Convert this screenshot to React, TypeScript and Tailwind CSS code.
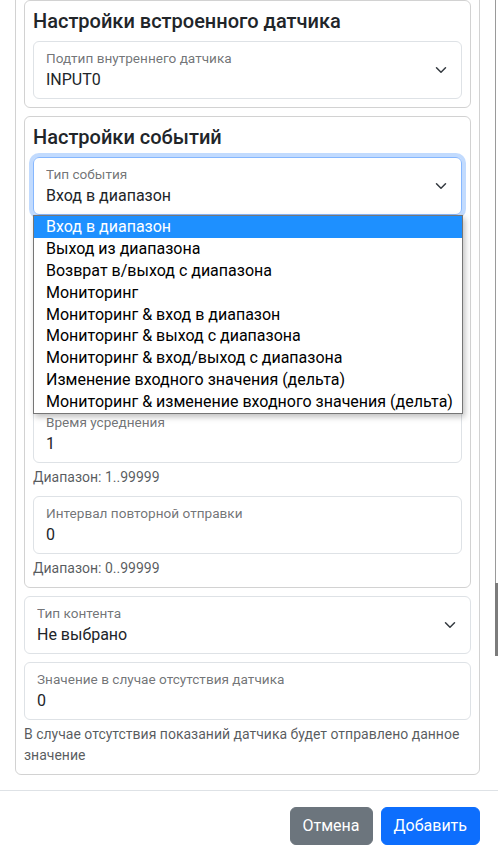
import React from "react";

const eventTypes = [
  "Вход в диапазон",
  "Выход из диапазона",
  "Возврат в/выход с диапазона",
  "Мониторинг",
  "Мониторинг & вход в диапазон",
  "Мониторинг & выход с диапазона",
  "Мониторинг & вход/выход с диапазона",
  "Изменение входного значения (дельта)",
  "Мониторинг & изменение входного значения (дельта)",
];

// bootstrap-like select arrow
const Chevron = () => (
  <svg width="16" height="12" viewBox="0 0 16 16" className="shrink-0">
    <path
      d="m2 5 6 6 6-6"
      fill="none"
      stroke="#343a40"
      strokeWidth="2"
      strokeLinecap="round"
      strokeLinejoin="round"
    />
  </svg>
);

interface FieldProps {
  label?: string;
  value?: string;
  select?: boolean;
  focused?: boolean;
  children?: React.ReactNode;
}

const FloatingField = ({ label, value, select, focused, children }: FieldProps) => (
  <div className="relative">
    <div
      className={`h-[58px] rounded-md border flex items-center pl-3 pr-3 ${
        focused
          ? "border-[#86b7fe] shadow-[0_0_0_4px_rgba(13,110,253,0.25)]"
          : "border-[#dee2e6]"
      }`}
    >
      {label && (
        <div className="flex-1 min-w-0 self-start pt-[7px]">
          <div className="text-[13.6px] leading-[19px] text-[rgba(33,37,41,0.65)] truncate">
            {label}
          </div>
          <div className="text-base leading-6 truncate">{value}</div>
        </div>
      )}
      {select && <Chevron />}
    </div>
    {children}
  </div>
);

const HelpText = ({ children }: { children?: React.ReactNode }) => (
  <div className="mt-1 min-h-[21px] text-sm leading-[21px] text-[rgba(33,37,41,0.75)]">
    {children}
  </div>
);

const CardTitle = ({ children }: { children: React.ReactNode }) => (
  <h5 className="text-[20px] font-medium leading-[24px] mb-2">{children}</h5>
);

export default function App() {
  return (
    <div className="h-[861px] w-[498px] flex flex-col bg-white overflow-hidden text-[#212529] font-['Segoe_UI','Roboto',sans-serif]">
      {/* Modal body */}
      <div className="flex-1 min-h-0 flex overflow-hidden">
        <div className="flex-1 min-w-0 pl-[15px] pr-[15px]">
          <div className="-mt-[9px] rounded-md border border-[rgba(0,0,0,0.175)] p-2">
            {/* Built-in sensor */}
            <div className="rounded-md border border-[rgba(0,0,0,0.175)] p-2 mb-2">
              <CardTitle>Настройки встроенного датчика</CardTitle>
              <FloatingField label="Подтип внутреннего датчика" value="INPUT0" select />
            </div>

            {/* Events */}
            <div className="rounded-md border border-[rgba(0,0,0,0.175)] p-2 mb-2">
              <CardTitle>Настройки событий</CardTitle>
              <div className="mb-2">
                <FloatingField label="Тип события" value="Вход в диапазон" select focused>
                  <ul className="absolute z-10 top-full left-0 right-[-1px] bg-white border border-[#767676] shadow-[2px_3px_6px_rgba(0,0,0,0.25)]">
                    {eventTypes.map((item, i) => (
                      <li
                        key={item}
                        className={`h-[21.9px] leading-[21.9px] pl-3 text-base whitespace-nowrap ${
                          i === 0 ? "bg-[#1e90ff] text-white" : "text-black"
                        }`}
                      >
                        {item}
                      </li>
                    ))}
                  </ul>
                </FloatingField>
              </div>
              {/* range bounds, under the open list */}
              <div className="mb-2">
                <FloatingField />
                <HelpText />
              </div>
              <div className="mb-2">
                <FloatingField />
                <HelpText />
              </div>
              <div className="mb-2">
                <FloatingField label="Время усреднения" value="1" />
                <HelpText>Диапазон: 1..99999</HelpText>
              </div>
              <div>
                <FloatingField label="Интервал повторной отправки" value="0" />
                <HelpText>Диапазон: 0..99999</HelpText>
              </div>
            </div>

            <div className="mb-2">
              <FloatingField label="Тип контента" value="Не выбрано" select />
            </div>
            <FloatingField label="Значение в случае отсутствия датчика" value="0" />
            <HelpText>В случае отсутствия показаний датчика будет отправлено данное значение</HelpText>
          </div>
        </div>

        {/* scrollbar */}
        <div className="w-[3px] flex flex-col">
          <div className="h-[583px] border-l border-[#9a9a9a]" />
          <div className="h-[73px] bg-[#7c7c7c]" />
        </div>
      </div>

      {/* Modal footer */}
      <div className="h-[71px] border-t border-[#dee2e6] flex items-center justify-end gap-2 pr-[18px]">
        <button className="h-[38px] px-3 rounded-md border border-[#6c757d] bg-[#6c757d] text-white text-base leading-6">
          Отмена
        </button>
        <button className="h-[38px] px-3 rounded-md border border-[#0d6efd] bg-[#0d6efd] text-white text-base leading-6">
          Добавить
        </button>
      </div>
    </div>
  );
}
